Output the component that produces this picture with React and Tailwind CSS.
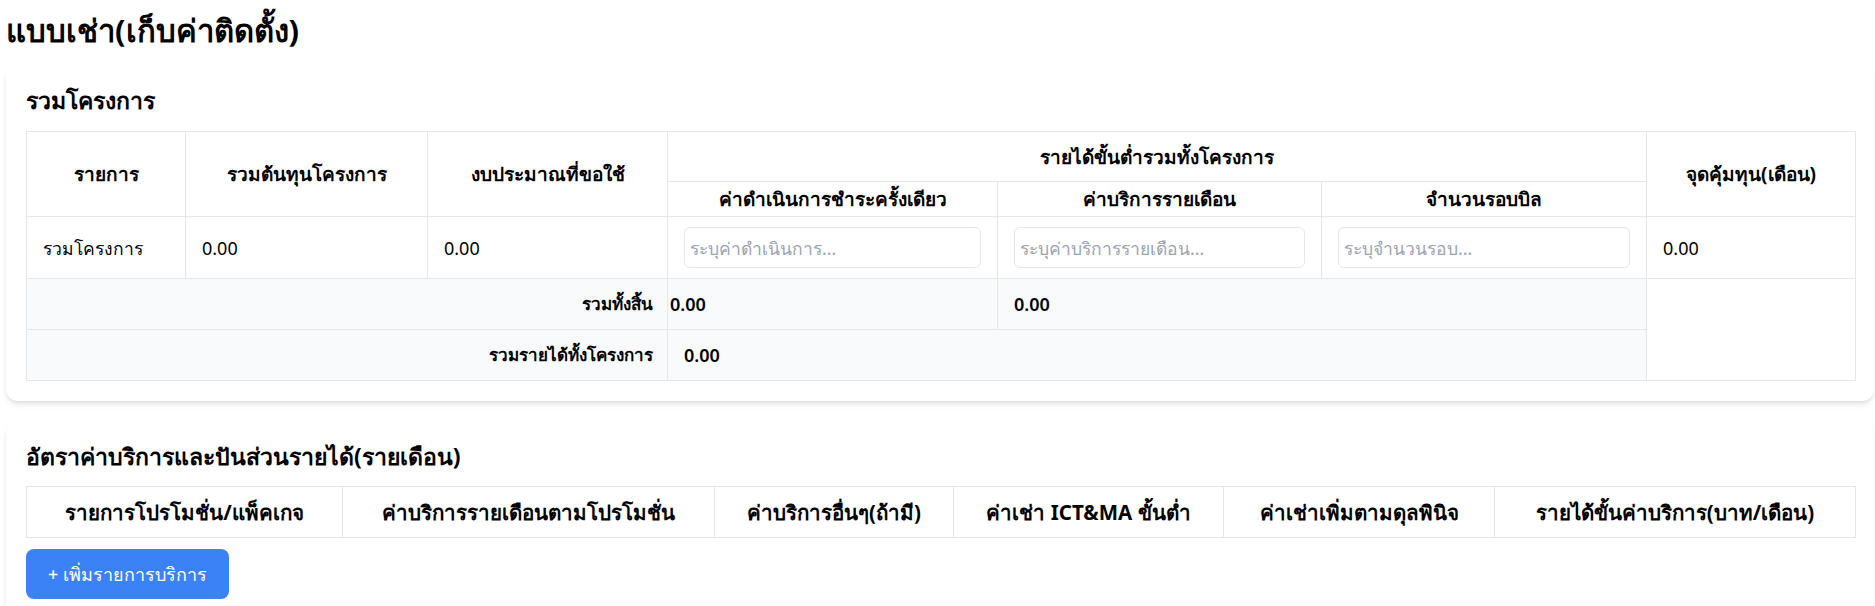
import { useState } from "react";

const font = { fontFamily: '"Noto Sans", "Liberation Sans", sans-serif' };

const summaryCols = [159, 242, 240, 330, 324, 325, 209];
const rateCols = [316, 372, 239, 270, 271, 361];

const rateHeaders = [
  "รายการโปรโมชั่น/แพ็คเกจ",
  "ค่าบริการรายเดือนตามโปรโมชั่น",
  "ค่าบริการอื่นๆ(ถ้ามี)",
  "ค่าเช่า ICT&MA ขั้นต่ำ",
  "ค่าเช่าเพิ่มตามดุลพินิจ",
  "รายได้ขั้นค่าบริการ(บาท/เดือน)",
];

const Cell = ({ children, className = "", ...rest }) => (
  <td className={`border border-[#e5e7eb] leading-6 ${className}`} {...rest}>
    {children}
  </td>
);

const Head = ({ children, className = "", ...rest }) => (
  <th
    className={`border border-[#e5e7eb] text-center leading-6 font-bold text-black ${className}`}
    {...rest}
  >
    {children}
  </th>
);

const App = () => {
  const [fee, setFee] = useState("");
  const [monthly, setMonthly] = useState("");
  const [rounds, setRounds] = useState("");

  const inputCls =
    "w-full h-[41px] rounded-md border border-[#e5e7eb] bg-white pl-[5px] pr-2 text-[17.5px] text-black placeholder:text-[#9ca3af] focus:outline-none";

  return (
    <div className="min-h-screen bg-white pl-1.5 pr-px pt-[12px] text-black" style={font}>
      <h1 className="mb-[17px] text-[31px] leading-9 font-bold">แบบเช่า(เก็บค่าติดตั้ง)</h1>

      {/* Project summary */}
      <div className="rounded-xl bg-white p-5 shadow-md">
        <h2 className="mb-[16px] text-[23px] leading-[30px] font-bold">รวมโครงการ</h2>
        <table className="w-[1829px] table-fixed border-collapse text-[18px]">
          <colgroup>
            {summaryCols.map((w, i) => (
              <col key={i} style={{ width: w }} />
            ))}
          </colgroup>
          <thead className="text-[19px]">
            <tr className="h-[50px]">
              <Head rowSpan={2}>รายการ</Head>
              <Head rowSpan={2}>รวมต้นทุนโครงการ</Head>
              <Head rowSpan={2}>งบประมาณที่ขอใช้</Head>
              <Head colSpan={3}>รายได้ขั้นต่ำรวมทั้งโครงการ</Head>
              <Head rowSpan={2}>จุดคุ้มทุน(เดือน)</Head>
            </tr>
            <tr className="h-[35px]">
              <Head>ค่าดำเนินการชำระครั้งเดียว</Head>
              <Head>ค่าบริการรายเดือน</Head>
              <Head>จำนวนรอบบิล</Head>
            </tr>
          </thead>
          <tbody>
            <tr className="h-[62px]">
              <Cell className="px-4 text-[17.5px]">รวมโครงการ</Cell>
              <Cell className="px-4">0.00</Cell>
              <Cell className="px-4">0.00</Cell>
              <Cell className="px-4 py-2.5">
                <input
                  className={inputCls}
                  placeholder="ระบุค่าดำเนินการ..."
                  value={fee}
                  onChange={(e) => setFee(e.target.value)}
                />
              </Cell>
              <Cell className="px-4 py-2.5">
                <input
                  className={inputCls}
                  placeholder="ระบุค่าบริการรายเดือน..."
                  value={monthly}
                  onChange={(e) => setMonthly(e.target.value)}
                />
              </Cell>
              <Cell className="px-4 py-2.5">
                <input
                  className={inputCls}
                  placeholder="ระบุจำนวนรอบ..."
                  value={rounds}
                  onChange={(e) => setRounds(e.target.value)}
                />
              </Cell>
              <Cell className="px-4">0.00</Cell>
            </tr>
            <tr className="h-[51px] bg-[#f9fafb]">
              <Cell colSpan={3} className="pr-[14px] text-right text-[17px] font-bold">
                รวมทั้งสิ้น
              </Cell>
              <Cell className="px-0.5 font-semibold">0.00</Cell>
              <Cell colSpan={2} className="px-4 font-semibold">
                0.00
              </Cell>
              <Cell rowSpan={2} className="bg-white" />
            </tr>
            <tr className="h-[51px] bg-[#f9fafb]">
              <Cell colSpan={3} className="pr-[14px] text-right text-[17px] font-bold">
                รวมรายได้ทั้งโครงการ
              </Cell>
              <Cell colSpan={3} className="px-4 font-semibold">
                0.00
              </Cell>
            </tr>
          </tbody>
        </table>
      </div>

      {/* Service rates */}
      <div className="mt-5 rounded-xl bg-white p-5 shadow-md">
        <h2 className="mb-[15px] text-[23px] leading-[30px] font-bold">
          อัตราค่าบริการและปันส่วนรายได้(รายเดือน)
        </h2>
        <table className="w-[1829px] table-fixed border-collapse">
          <colgroup>
            {rateCols.map((w, i) => (
              <col key={i} style={{ width: w }} />
            ))}
          </colgroup>
          <thead className="text-[20.5px]">
            <tr className="h-[51px]">
              {rateHeaders.map((h) => (
                <Head key={h}>{h}</Head>
              ))}
            </tr>
          </thead>
        </table>
        <button className="mt-[11px] h-[50px] w-[203px] rounded-lg bg-[#3b82f6] text-[18px] font-medium text-white">
          + เพิ่มรายการบริการ
        </button>
      </div>
    </div>
  );
};

export default App;
